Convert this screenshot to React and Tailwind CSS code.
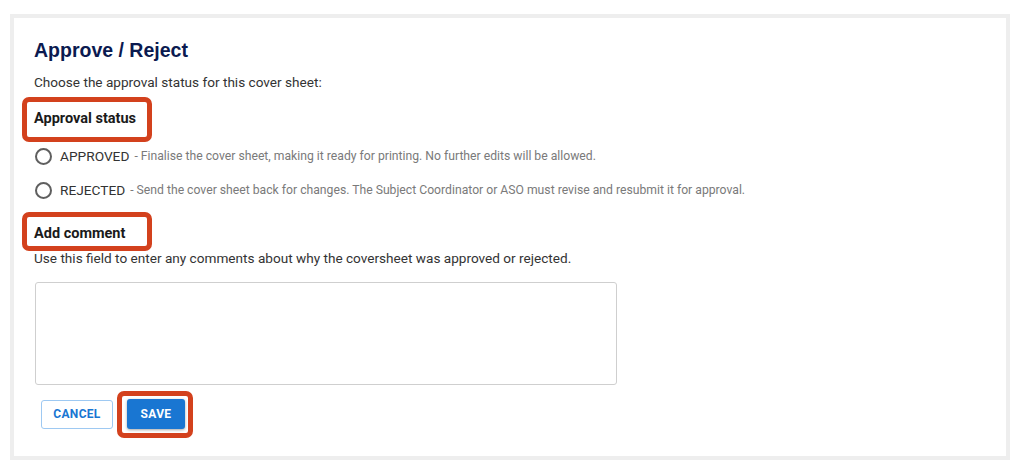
import { useState } from 'react'

const STATUSES = [
  {
    value: 'APPROVED',
    note: 'Finalise the cover sheet, making it ready for printing. No further edits will be allowed.',
  },
  {
    value: 'REJECTED',
    note: 'Send the cover sheet back for changes. The Subject Coordinator or ASO must revise and resubmit it for approval.',
  },
]

// red call-out ring drawn around a control
function Callout({ className }) {
  return <span className={`pointer-events-none absolute rounded-[7px] border-[5px] border-[#d3411d] ${className}`} />
}

function StatusOption({ option, checked, onChange }) {
  return (
    <label className="flex h-[28px] items-center cursor-pointer">
      <input type="radio" name="status" className="sr-only" checked={checked} onChange={onChange} />
      <span className="ml-px flex h-[17px] w-[17px] items-center justify-center rounded-full border-2 border-[#5f5f5f]">
        {checked && <span className="h-[8px] w-[8px] rounded-full bg-[#1976d2]" />}
      </span>
      <span className="ml-[8px] text-[13.7px] text-[#333]">{option.value}</span>
      <span className="ml-[5px] text-[12.2px] text-[#7a7a7a]">- {option.note}</span>
    </label>
  )
}

export default function App() {
  const [status, setStatus] = useState(null)
  const [comment, setComment] = useState('')

  return (
    <div className="min-h-[471px] bg-white px-[10px] pt-[14px]" style={{ fontFamily: 'Roboto, "Liberation Sans", sans-serif' }}>
      <div className="h-[446px] w-[1000px] border-4 border-[#eeeeee] bg-white pl-[20px] pt-[20px]">
        <h2 className="text-[19.5px] font-bold leading-[24px] text-[#0b1a50]" style={{ fontFamily: '"Liberation Sans", Arial, sans-serif' }}>
          Approve / Reject
        </h2>
        <p className="mt-[10px] text-[13.6px] leading-[20px] text-[#333]">Choose the approval status for this cover sheet:</p>

        <div className="mt-[17px] flex">
          <span className="relative block text-[14.5px] font-bold leading-[20px] text-[#1a1a1a]">
            Approval status
            <Callout className="-left-[12px] -right-[16px] -top-[12px] -bottom-[13px]" />
          </span>
        </div>

        <div className="mt-[13px] flex flex-col gap-[6px]">
          {STATUSES.map((s) => (
            <StatusOption key={s.value} option={s} checked={status === s.value} onChange={() => setStatus(s.value)} />
          ))}
        </div>

        <div className="mt-[20px] flex">
          <span className="relative block text-[14.5px] font-bold leading-[20px] text-[#1a1a1a]">
            Add comment
            <Callout className="-left-[12px] -right-[27px] -top-[12px] -bottom-[7px]" />
          </span>
        </div>
        <p className="mt-[4px] text-[13.6px] leading-[20px] text-[#333]">
          Use this field to enter any comments about why the coversheet was approved or rejected.
        </p>

        <textarea
          value={comment}
          onChange={(e) => setComment(e.target.value)}
          className="mt-[14px] ml-px block h-[103px] w-[582px] resize-none rounded-[3px] border border-[#cfcfcf] p-2 text-[14px] outline-none"
        />

        <div className="mt-[14px] ml-[7px] flex items-center gap-[14px]">
          <button className="h-[29px] w-[72px] rounded-[3px] border border-[#9ec9f2] bg-white text-[12px] font-bold tracking-[0.3px] text-[#1976d2]">
            CANCEL
          </button>
          <span className="relative flex">
            <button className="h-[30px] w-[58px] rounded-[3px] bg-[#1976d2] text-[12px] font-bold tracking-[0.3px] text-white shadow-[0_1px_3px_rgba(0,0,0,0.35)]">
              SAVE
            </button>
            <Callout className="-left-[10px] -right-[8px] -top-[8px] -bottom-[9px]" />
          </span>
        </div>
      </div>
    </div>
  )
}
